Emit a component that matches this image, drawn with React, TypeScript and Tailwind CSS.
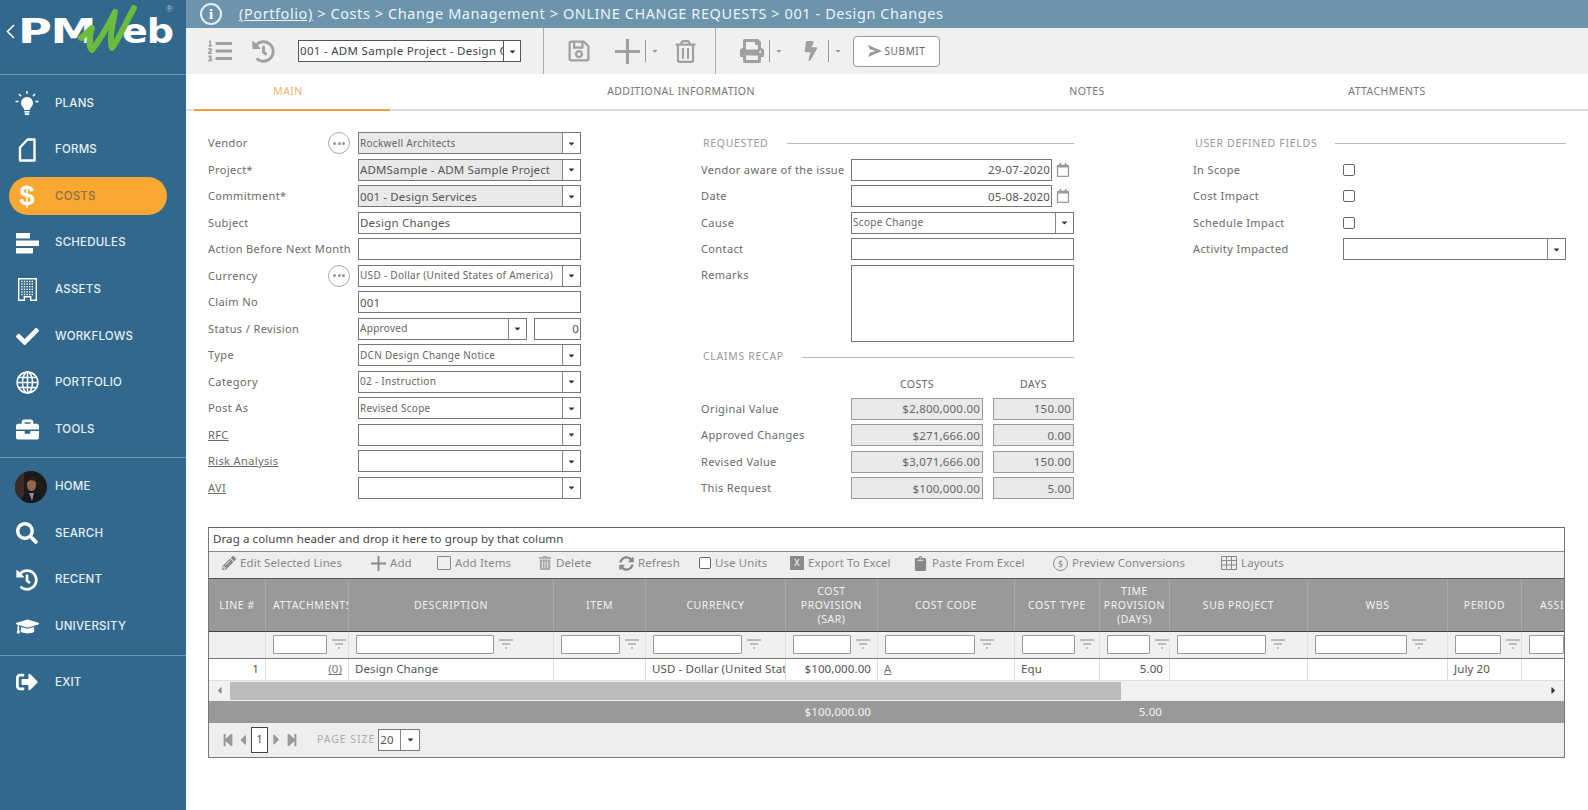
import type { ReactNode } from 'react'
import {
  FaBolt,
  FaBriefcase,
  FaCaretDown,
  FaCaretLeft,
  FaCaretRight,
  FaCheck,
  FaClipboard,
  FaGraduationCap,
  FaHistory,
  FaListOl,
  FaPencilAlt,
  FaPrint,
  FaRegCalendar,
  FaRegSave,
  FaRegTrashAlt,
  FaSearch,
  FaSignOutAlt,
  FaStepBackward,
  FaStepForward,
  FaSyncAlt,
  FaTrashAlt,
} from 'react-icons/fa'

const FONT = "font-['Noto_Sans','Open_Sans',sans-serif]"
const COLS = 'grid grid-cols-[57px_83px_205px_92px_140px_92px_137px_85px_70px_138px_140px_74px_1fr]'

function BulbIcon() {
  return (
    <svg width="26" height="26" viewBox="0 0 26 26" fill="white" className="shrink-0">
      <path d="M13 7a6 6 0 0 0-4 10.4c.8.8 1.2 1.6 1.3 2.6h5.4c.1-1 .5-1.8 1.3-2.6A6 6 0 0 0 13 7z" />
      <rect x="10.4" y="21" width="5.2" height="1.6" />
      <rect x="10.8" y="23.2" width="4.4" height="1.8" />
      <g stroke="white" strokeWidth="1.4">
        <path d="M13 1v3M5 4l2 2.2M21 4l-2 2.2M1.5 11.5h3M21.5 11.5h3" />
      </g>
    </svg>
  )
}

function FormIcon() {
  return (
    <svg width="18" height="24" viewBox="0 0 18 24" fill="none" stroke="white" strokeWidth="2.4" className="shrink-0">
      <path d="M2 9.5 9.5 1.5H16.5V22.5H2z" strokeLinejoin="round" />
    </svg>
  )
}

function DollarIcon() {
  return (
    <span className="font-['Liberation_Sans',sans-serif] text-[27px] leading-none font-bold text-white">$</span>
  )
}

function ScheduleIcon() {
  return (
    <svg width="23" height="21" viewBox="0 0 23 21" fill="white" className="shrink-0">
      <rect x="0" y="0" width="14" height="5.5" />
      <rect x="0" y="7.5" width="23" height="5.5" />
      <rect x="0" y="15" width="17" height="5.5" />
    </svg>
  )
}

function BuildingIcon() {
  const dots = []
  for (let r = 0; r < 6; r++) {
    for (let c = 0; c < 5; c++) {
      dots.push(<rect key={`${r}-${c}`} x={3.2 + c * 2.6} y={2.8 + r * 2.6} width="1.4" height="1.4" />)
    }
  }
  return (
    <svg width="19" height="23" viewBox="0 0 19 23" fill="white" className="shrink-0">
      <path d="M0 0h19v23H12v-3.5H7V23H0zM1.4 1.4v20.2h4.2v-3.5h7.8v3.5h4.2V1.4z" />
      {dots}
    </svg>
  )
}

function GlobeIcon() {
  return (
    <svg width="23" height="23" viewBox="0 0 23 23" fill="none" stroke="white" strokeWidth="1.5" className="shrink-0">
      <circle cx="11.5" cy="11.5" r="10.4" />
      <ellipse cx="11.5" cy="11.5" rx="5" ry="10.4" />
      <path d="M11.5 1v21M1 11.5h21M2.5 6.5h18M2.5 16.5h18" />
    </svg>
  )
}

function PlusIcon({ size, width }: { size: number; width: number }) {
  return (
    <svg width={size} height={size} viewBox="0 0 24 24" stroke="currentColor" strokeWidth={width} className="shrink-0">
      <path d="M12 0v24M0 12h24" />
    </svg>
  )
}

function Avatar() {
  return (
    <svg width="32" height="32" viewBox="0 0 32 32" className="shrink-0 translate-x-[4px]">
      <clipPath id="avatar-clip">
        <circle cx="16" cy="16" r="16" />
      </clipPath>
      <g clipPath="url(#avatar-clip)">
        <rect width="32" height="32" fill="#1d1a1c" />
        <rect x="0" y="0" width="9" height="32" fill="#3a2a28" />
        <path d="M5 32c1-7 5-9 11-10 5 1 10 3 11 10z" fill="#15171f" />
        <path d="M14 22h5l-2 8z" fill="#8b8f9a" />
        <ellipse cx="16.5" cy="14" rx="4.6" ry="6.2" fill="#8f6450" />
        <path d="M11.5 12c0-5 3-6.5 5.5-6.5s4.5 2 4.5 6c-2-2.5-6.5-3-10-.5z" fill="#2a1c18" />
      </g>
    </svg>
  )
}

function NavItem({ icon, label, active }: { icon: ReactNode; label: string; active?: boolean }) {
  return (
    <div className="h-[46.6px] flex items-center pl-[9px]">
      <div className={`w-[158px] h-[38px] rounded-full flex items-center pl-[7px] gap-[17px] ${active ? 'bg-[#f9a832]' : ''}`}>
        <div className="w-[22px] flex items-center justify-center shrink-0">{icon}</div>
        <span className={`font-['Inter',sans-serif] text-[11.5px] font-medium tracking-[0.2px] ${active ? 'text-[#86714b]' : 'text-[#e6eff5]'}`}>
          {label}
        </span>
      </div>
    </div>
  )
}

function Logo() {
  return (
    <div className="h-[75px] relative border-b border-[#6d9ab5] overflow-hidden">
      <svg className="absolute left-[6px] top-[24px]" width="9" height="15" viewBox="0 0 9 15" fill="none" stroke="white" strokeWidth="1.6">
        <path d="M8 1 1.5 7.5 8 14" />
      </svg>
      <span className="absolute left-[18px] top-[17px] font-['DejaVu_Sans',sans-serif] font-bold text-[34px] leading-[28px] text-white tracking-[-1px] origin-left scale-x-[1.36]">
        PM
      </span>
      <span className="absolute left-[122px] top-[17px] font-['DejaVu_Sans',sans-serif] font-bold text-[34px] leading-[28px] text-white tracking-[-1px] origin-left scale-x-[1.12]">
        eb
      </span>
      <svg className="absolute left-[78px] top-[5px]" width="60" height="50" viewBox="0 0 60 50" fill="none">
        <path
          d="M3 33 14 23 C11 33 10 41 14 45 C24 32 32 17 37 7 C34 20 31 35 34 43 C41 34 49 15 56 3"
          stroke="#6cbb3c"
          strokeWidth="6"
          strokeLinecap="round"
          strokeLinejoin="round"
        />
      </svg>
      <span className="absolute left-[166px] top-[4px] font-['Liberation_Sans',sans-serif] text-[9px] leading-[10px] text-[#a9c3d4]">®</span>
    </div>
  )
}

function Sidebar() {
  return (
    <aside className="w-[186px] h-[810px] shrink-0 bg-[#31688c]">
      <Logo />
      <div className="pt-[5px]">
        <NavItem icon={<BulbIcon />} label="PLANS" />
        <NavItem icon={<FormIcon />} label="FORMS" />
        <NavItem icon={<DollarIcon />} label="COSTS" active />
        <NavItem icon={<ScheduleIcon />} label="SCHEDULES" />
        <NavItem icon={<BuildingIcon />} label="ASSETS" />
        <NavItem icon={<FaCheck size={23} color="white" className="shrink-0" />} label="WORKFLOWS" />
        <NavItem icon={<GlobeIcon />} label="PORTFOLIO" />
        <NavItem icon={<FaBriefcase size={23} color="white" className="shrink-0" />} label="TOOLS" />
      </div>
      <div className="mt-[4px] border-t border-[#6d9ab5] pt-[5.5px]">
        <NavItem icon={<Avatar />} label="HOME" />
        <NavItem icon={<FaSearch size={22} color="white" />} label="SEARCH" />
        <NavItem icon={<FaHistory size={22} color="white" />} label="RECENT" />
        <NavItem icon={<FaGraduationCap size={23} color="white" className="shrink-0" />} label="UNIVERSITY" />
      </div>
      <div className="mt-[5px] border-t border-[#6d9ab5] pt-[3.5px]">
        <NavItem icon={<FaSignOutAlt size={22} color="white" />} label="EXIT" />
      </div>
    </aside>
  )
}

function TopBar() {
  return (
    <div className="h-[28px] bg-[#6c94ac] flex items-center pl-[14px] text-white">
      <div className="w-[22px] h-[22px] rounded-full border-2 border-[#e4edf2] flex items-center justify-center font-['Liberation_Serif',serif] text-[15px] font-bold leading-none">
        i
      </div>
      <div className="ml-[17px] text-[14.5px] tracking-[0.58px] text-[#edf3f6] whitespace-nowrap">
        <span className="underline">(Portfolio)</span> &gt; Costs &gt; Change Management &gt; ONLINE CHANGE REQUESTS &gt; 001 - Design Changes
      </div>
    </div>
  )
}

function Split({ left }: { left: string }) {
  return (
    <div className={`flex items-center gap-[5px] ${left}`}>
      <div className="w-px h-[22px] bg-[#999]" />
      <FaCaretDown size={8} color="#999" />
    </div>
  )
}

function Toolbar() {
  return (
    <div className="h-[46px] bg-[#f0f0f0] flex items-center text-[#a0a0a0]">
      <FaListOl size={24} className="ml-[22px]" />
      <FaHistory size={23} className="ml-[20px]" />
      <div className="ml-[23px] w-[223px] h-[22px] bg-white border border-[#555] flex items-center">
        <span className="flex-1 pl-[1px] text-[11.5px] tracking-[0.3px] text-[#444] whitespace-nowrap overflow-hidden">
          001 - ADM Sample Project - Design Changes
        </span>
        <div className="w-[17px] h-full border-l border-[#555] flex items-center justify-center shrink-0">
          <FaCaretDown size={9} color="#333" />
        </div>
      </div>
      <div className="ml-[22px] w-px h-[46px] bg-[#aaa]" />
      <FaRegSave size={24} className="ml-[23px]" />
      <div className="ml-[24px]">
        <PlusIcon size={25} width={3} />
      </div>
      <Split left="ml-[5px]" />
      <FaRegTrashAlt size={23} className="ml-[15px]" />
      <div className="ml-[18px] w-px h-[46px] bg-[#aaa]" />
      <FaPrint size={24} className="ml-[24px]" />
      <Split left="ml-[5px]" />
      <FaBolt size={20} className="ml-[18px]" />
      <Split left="ml-[7px]" />
      <div className="ml-[11px] w-[87px] h-[31px] bg-white border border-[#999] rounded-[4px] flex items-center justify-center gap-[3px]">
        <svg width="14" height="12" viewBox="0 0 14 12" fill="#999">
          <path d="M0 0 14 6 0 12 2 7.4 8 6 2 4.6z" />
        </svg>
        <span className="text-[10px] tracking-[0.6px] text-[#666]">SUBMIT</span>
      </div>
    </div>
  )
}

function Tabs() {
  return (
    <div className="h-[37px] border-b-2 border-[#dcdcdc] flex text-[10.5px] tracking-[0.4px] text-[#777] bg-white">
      <div className="ml-[8px] w-[196px] h-[37px] border-b-2 border-[#ef9f3f] flex items-center justify-center pr-[8px] text-[#efb36e]">MAIN</div>
      <div className="w-[582px] flex items-center justify-center">ADDITIONAL INFORMATION</div>
      <div className="w-[230px] flex items-center justify-center">NOTES</div>
      <div className="w-[370px] flex items-center justify-center">ATTACHMENTS</div>
    </div>
  )
}

function Row({ label, link, children }: { label?: string; link?: boolean; children?: ReactNode }) {
  return (
    <div className="h-[26.5px] flex items-center">
      <div className={`w-[150px] shrink-0 text-[11px] tracking-[0.38px] text-[#6a6a6a] whitespace-nowrap ${link ? 'underline' : ''}`}>{label}</div>
      <div className="flex-1 min-w-0 flex items-center">{children}</div>
    </div>
  )
}

function Select({ value, small, disabled, className }: { value?: string; small?: boolean; disabled?: boolean; className?: string }) {
  return (
    <div className={`h-[22px] border border-[#777] flex items-center ${disabled ? 'bg-[#e9e9e9]' : 'bg-white'} ${className ?? 'w-full'}`}>
      <span className={`flex-1 pl-[1px] whitespace-nowrap overflow-hidden ${small ? 'text-[10px] tracking-[0.3px] text-[#666]' : 'text-[11.5px] tracking-[0.15px] text-[#555]'}`}>
        {value}
      </span>
      <div className="w-[18px] h-full bg-white border-l border-[#888] flex items-center justify-center shrink-0">
        <FaCaretDown size={9} color="#333" />
      </div>
    </div>
  )
}

function Input({ value, right, className }: { value?: string; right?: boolean; className?: string }) {
  return (
    <div className={`h-[22px] bg-white border border-[#777] flex items-center px-[1px] text-[11.5px] tracking-[0.2px] text-[#555] whitespace-nowrap ${right ? 'justify-end' : ''} ${className ?? 'w-full'}`}>
      {value}
    </div>
  )
}

function ReadOnly({ value, className }: { value: string; className: string }) {
  return (
    <div className={`h-[22px] bg-[#e9e9e9] border border-[#999] flex items-center justify-end px-[2px] text-[11.5px] tracking-[0.2px] text-[#666] ${className}`}>
      {value}
    </div>
  )
}

function DotsButton() {
  return (
    <div className="absolute left-[-30px] w-[22px] h-[22px] rounded-full border border-[#aaa] bg-white flex items-center justify-center gap-[1.5px]">
      <span className="w-[3px] h-[3px] rounded-full bg-[#999]" />
      <span className="w-[3px] h-[3px] rounded-full bg-[#999]" />
      <span className="w-[3px] h-[3px] rounded-full bg-[#999]" />
    </div>
  )
}

function Section({ title }: { title: string }) {
  return (
    <div className="h-[26.5px] flex items-center gap-[18px] pl-[2px] pt-[1px]">
      <span className="text-[10.5px] tracking-[0.7px] text-[#999] whitespace-nowrap">{title}</span>
      <div className="flex-1 h-px bg-[#bbb]" />
    </div>
  )
}

function DateInput({ value }: { value: string }) {
  return (
    <>
      <Input value={value} right className="w-[201px]" />
      <FaRegCalendar size={14} color="#999" className="ml-[4px]" />
    </>
  )
}

function Recap({ label, cost, days }: { label: string; cost: string; days: string }) {
  return (
    <Row label={label}>
      <ReadOnly value={cost} className="w-[132px]" />
      <ReadOnly value={days} className="w-[81px] ml-[10px]" />
    </Row>
  )
}

function CheckRow({ label }: { label: string }) {
  return (
    <Row label={label}>
      <div className="w-[12px] h-[12px] border border-[#666] rounded-[2px] bg-white" />
    </Row>
  )
}

function Form() {
  return (
    <div className="pt-[19px] pl-[22px] flex gap-[120px]">
      <div className="w-[373px]">
        <Row label="Vendor">
          <div className="relative w-full flex items-center">
            <DotsButton />
            <Select value="Rockwell Architects" small disabled />
          </div>
        </Row>
        <Row label="Project*"><Select value="ADMSample - ADM Sample Project" disabled /></Row>
        <Row label="Commitment*"><Select value="001 - Design Services" disabled /></Row>
        <Row label="Subject"><Input value="Design Changes" /></Row>
        <Row label="Action Before Next Month"><Input /></Row>
        <Row label="Currency">
          <div className="relative w-full flex items-center">
            <DotsButton />
            <Select value="USD - Dollar (United States of America)" small />
          </div>
        </Row>
        <Row label="Claim No"><Input value="001" /></Row>
        <Row label="Status / Revision">
          <Select value="Approved" small className="w-[169px]" />
          <Input value="0" right className="w-[47px] ml-[7px]" />
        </Row>
        <Row label="Type"><Select value="DCN Design Change Notice" small /></Row>
        <Row label="Category"><Select value="02 - Instruction" small /></Row>
        <Row label="Post As"><Select value="Revised Scope" small /></Row>
        <Row label="RFC" link><Select /></Row>
        <Row label="Risk Analysis" link><Select /></Row>
        <Row label="AVI" link><Select /></Row>
      </div>

      <div className="w-[373px]">
        <Section title="REQUESTED" />
        <Row label="Vendor aware of the issue"><DateInput value="29-07-2020" /></Row>
        <Row label="Date"><DateInput value="05-08-2020" /></Row>
        <Row label="Cause"><Select value="Scope Change" small /></Row>
        <Row label="Contact"><Input /></Row>
        <div className="h-[81px] flex items-start pt-[2px]">
          <div className="w-[150px] shrink-0 h-[22px] flex items-center text-[11px] tracking-[0.38px] text-[#6a6a6a]">Remarks</div>
          <div className="flex-1 h-[77px] bg-white border border-[#777]" />
        </div>
        <Section title="CLAIMS RECAP" />
        <div className="h-[25.5px] pt-[4px] flex items-center text-[10.5px] tracking-[0.4px] text-[#666]">
          <div className="w-[150px]" />
          <div className="w-[132px] text-center">COSTS</div>
          <div className="w-[81px] ml-[10px] text-center">DAYS</div>
        </div>
        <Recap label="Original Value" cost="$2,800,000.00" days="150.00" />
        <Recap label="Approved Changes" cost="$271,666.00" days="0.00" />
        <Recap label="Revised Value" cost="$3,071,666.00" days="150.00" />
        <Recap label="This Request" cost="$100,000.00" days="5.00" />
      </div>

      <div className="w-[373px] -ml-[1px]">
        <Section title="USER DEFINED FIELDS" />
        <CheckRow label="In Scope" />
        <CheckRow label="Cost Impact" />
        <CheckRow label="Schedule Impact" />
        <Row label="Activity Impacted"><Select /></Row>
      </div>
    </div>
  )
}

const TOOL_ITEMS = [
  { width: 'w-[149px]', label: 'Edit Selected Lines', icon: <FaPencilAlt size={14} /> },
  { width: 'w-[66px]', label: 'Add', icon: <PlusIcon size={15} width={3} /> },
  { width: 'w-[101px]', label: 'Add Items', icon: <div className="w-[14px] h-[14px] border border-[#888] rounded-[1px]" /> },
  { width: 'w-[81px]', label: 'Delete', icon: <FaTrashAlt size={14} color="#aaa" /> },
  { width: 'w-[80px]', label: 'Refresh', icon: <FaSyncAlt size={15} /> },
  { width: 'w-[91px]', label: 'Use Units', icon: <div className="w-[12px] h-[12px] border border-[#666] rounded-[2px] bg-white" /> },
  {
    width: 'w-[123px]',
    label: 'Export To Excel',
    icon: <div className="w-[14px] h-[14px] bg-[#8a8a8a] text-white text-[9px] leading-[14px] text-center">X</div>,
  },
  { width: 'w-[140px]', label: 'Paste From Excel', icon: <FaClipboard size={15} /> },
  {
    width: 'w-[168px]',
    label: 'Preview Conversions',
    icon: <div className="w-[15px] h-[15px] rounded-full border border-[#888] text-[9px] leading-[13px] text-center text-[#888]">$</div>,
  },
  {
    width: 'w-[90px]',
    label: 'Layouts',
    icon: (
      <svg width="16" height="14" viewBox="0 0 16 14" fill="none" stroke="#888">
        <path d="M.5.5h15v13H.5zM.5 4.5h15M.5 9h15M5.5.5v13M10.5.5v13" />
      </svg>
    ),
  },
]

const HEADERS = [
  'LINE #',
  'ATTACHMENTS',
  'DESCRIPTION',
  'ITEM',
  'CURRENCY',
  'COST PROVISION (SAR)',
  'COST CODE',
  'COST TYPE',
  'TIME PROVISION (DAYS)',
  'SUB PROJECT',
  'WBS',
  'PERIOD',
]

const FILTER_WIDTHS = [
  'w-[54px]',
  'w-[138px]',
  'w-[59px]',
  'w-[89px]',
  'w-[58px]',
  'w-[90px]',
  'w-[53px]',
  'w-[43px]',
  'w-[89px]',
  'w-[92px]',
  'w-[46px]',
]

function FilterGlyph() {
  return (
    <svg width="14" height="11" viewBox="0 0 14 11" stroke="#aaa" strokeWidth="1.5">
      <path d="M0 1h14M3 5h8M6 9h2" />
    </svg>
  )
}

function FilterCell({ width }: { width: string }) {
  return (
    <div className="pl-[7px] flex items-center border-r border-[#e2e2e2] overflow-hidden">
      <div className={`shrink-0 h-[19px] bg-white border border-[#999] rounded-[1px] ${width}`} />
      <div className="w-[24px] flex justify-center shrink-0">
        <FilterGlyph />
      </div>
    </div>
  )
}

function DataCell({ children, right, className }: { children?: ReactNode; right?: boolean; className?: string }) {
  return (
    <div className={`h-full border-r border-[#ddd] flex items-center px-[6px] whitespace-nowrap overflow-hidden ${right ? 'justify-end' : ''} ${className ?? ''}`}>
      {children}
    </div>
  )
}

function Grid() {
  return (
    <div className="mt-[25px] ml-[22px] w-[1357px] border border-[#777] border-t-[#666] text-[11.5px] tracking-[0.1px]">
      <div className="h-[24px] flex items-center pl-[4px] border-b border-[#888] text-[#444]">
        Drag a column header and drop it here to group by that column
      </div>
      <div className="h-[27px] bg-[#eeeeee] flex items-center pl-[13px] pb-[3px] text-[#888] border-b border-[#555]">
        {TOOL_ITEMS.map((item) => (
          <div key={item.label} className={`flex items-center gap-[4px] whitespace-nowrap shrink-0 ${item.width}`}>
            {item.icon}
            <span>{item.label}</span>
          </div>
        ))}
      </div>
      <div className={`${COLS} h-[53px] bg-[#999999] text-[#f2f2f2] text-[10.5px] leading-[14px] tracking-[0.55px] border-b border-[#444]`}>
        {HEADERS.map((h) =>
          h === 'ATTACHMENTS' ? (
            <div key={h} className="flex items-center pl-[7px] border-r border-[#a9a9a9] overflow-hidden whitespace-nowrap">
              {h}
            </div>
          ) : (
            <div key={h} className="flex items-center justify-center text-center border-r border-[#a9a9a9] overflow-hidden px-[2px]">
              {h}
            </div>
          ),
        )}
        <div className="flex items-center pl-[18px] whitespace-nowrap overflow-hidden">ASSIGNED TO</div>
      </div>
      <div className={`${COLS} h-[27px] bg-[#f0f0f0] border-b border-[#777]`}>
        <div className="border-r border-[#e2e2e2]" />
        {FILTER_WIDTHS.map((w, i) => (
          <FilterCell key={i} width={w} />
        ))}
        <div className="pl-[7px] flex items-center overflow-hidden">
          <div className="w-full h-[19px] bg-white border border-[#999] rounded-[1px]" />
        </div>
      </div>
      <div className={`${COLS} h-[22px] bg-white text-[#555] border-b border-[#ddd]`}>
        <DataCell right>1</DataCell>
        <DataCell right className="underline text-[#777]">(0)</DataCell>
        <DataCell>Design Change</DataCell>
        <DataCell />
        <DataCell className="pr-0">USD - Dollar (United States of America)</DataCell>
        <DataCell right>$100,000.00</DataCell>
        <DataCell className="underline text-[#777]">A</DataCell>
        <DataCell>Equ</DataCell>
        <DataCell right>5.00</DataCell>
        <DataCell />
        <DataCell />
        <DataCell>July 20</DataCell>
        <div />
      </div>
      <div className="h-[20px] bg-[#f1f1f1] flex items-center">
        <div className="w-[21px] flex justify-center shrink-0">
          <FaCaretLeft size={11} color="#888" />
        </div>
        <div className="w-[891px] h-[18px] bg-[#bbbbbb]" />
        <div className="flex-1 flex justify-end pr-[5px]">
          <FaCaretRight size={11} color="#333" />
        </div>
      </div>
      <div className={`${COLS} h-[22px] bg-[#999999] text-[#f2f2f2] items-center`}>
        <div /><div /><div /><div /><div />
        <div className="text-right pr-[7px]">$100,000.00</div>
        <div /><div />
        <div className="text-right pr-[8px]">5.00</div>
      </div>
      <div className="h-[34px] bg-[#eeeeee] flex items-center pl-[12px] text-[#999]">
        <FaStepBackward size={14} />
        <FaCaretLeft size={16} />
        <div className="w-[17px] h-[26px] bg-white border border-[#444] flex items-center justify-center text-[10.5px] text-[#444]">1</div>
        <FaCaretRight size={17} />
        <FaStepForward size={14} />
        <span className="ml-[18px] text-[10.5px] tracking-[0.95px] text-[#aaa] whitespace-nowrap">PAGE SIZE</span>
        <div className="ml-[3px] w-[42px] h-[22px] bg-white border border-[#777] flex items-center">
          <span className="flex-1 pl-[1px] text-[#555]">20</span>
          <div className="w-[19px] h-full border-l border-[#888] flex items-center justify-center">
            <FaCaretDown size={9} color="#333" />
          </div>
        </div>
      </div>
    </div>
  )
}

export default function App() {
  return (
    <div className={`flex w-full h-[810px] bg-white overflow-hidden ${FONT}`}>
      <Sidebar />
      <main className="flex-1 min-w-0">
        <TopBar />
        <Toolbar />
        <Tabs />
        <Form />
        <Grid />
      </main>
    </div>
  )
}
